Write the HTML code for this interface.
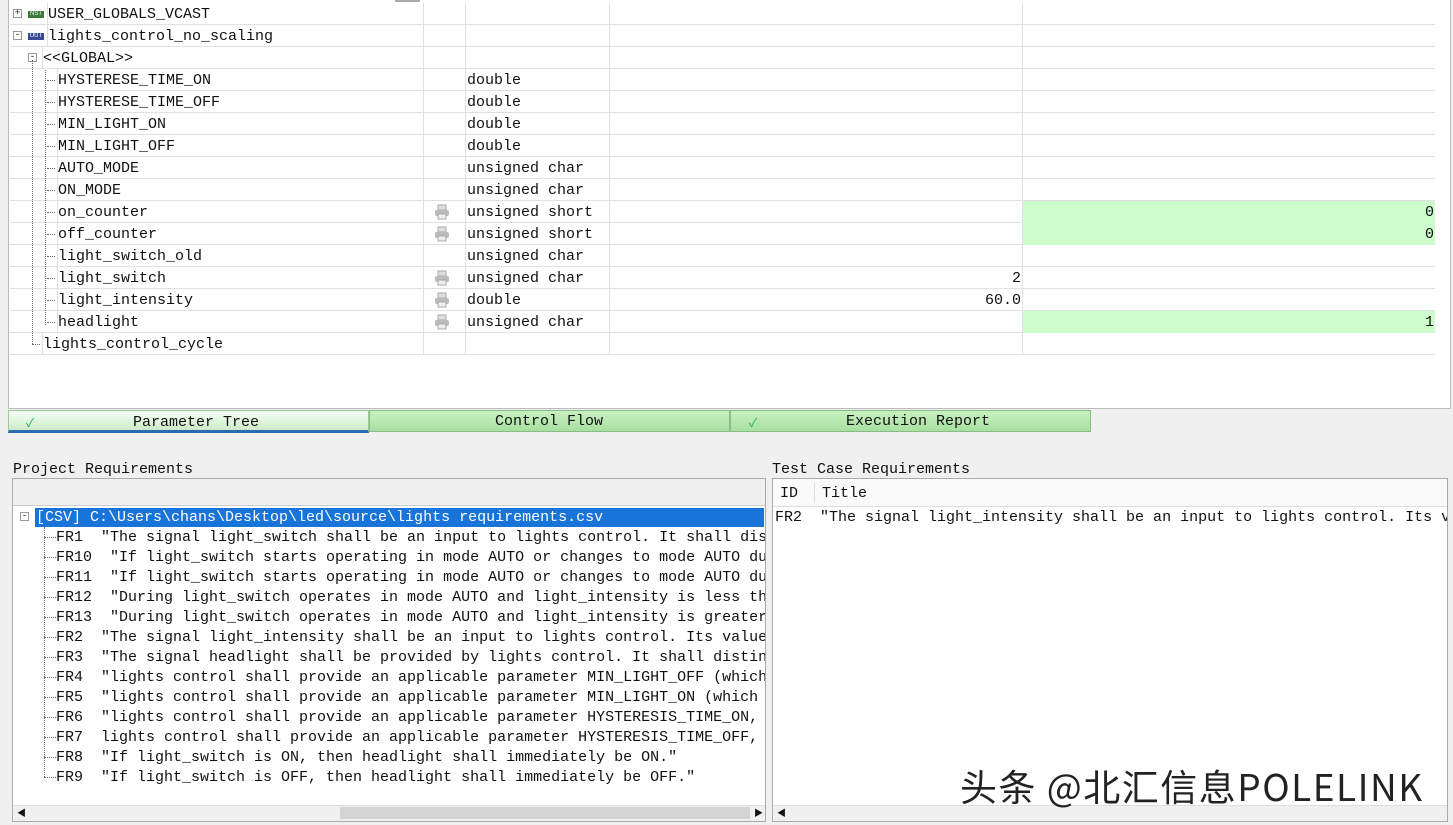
<!DOCTYPE html>
<html><head><meta charset="utf-8"><style>
*{margin:0;padding:0;box-sizing:border-box}
body{width:1453px;height:825px;background:#f0f0f0;position:relative;overflow:hidden;font-family:"Liberation Mono","Noto Sans CJK SC",monospace;font-size:15px;color:#111}
.a{position:absolute;white-space:nowrap}
.top{position:absolute;left:8px;top:0;width:1443px;height:409px;background:#fff;border:1px solid #bbb;border-top:none}
.row{position:absolute;left:10px;width:1425px;height:22px;border-bottom:1px solid #e0e0e0}
.c{position:absolute;top:0;height:22px;border-left:1px solid #e0e0e0;line-height:24px}
.g{background:#cdfccd}
.pr{position:absolute;left:433px;top:3px;width:18px;height:16px}
.req{position:absolute;line-height:20px;white-space:pre}
</style></head><body>
<div class="top"></div>
<div class="a" style="left:395px;top:0;width:25px;height:2px;background:#aaa"></div>
<div id="rows"></div>
<script>
var R=[
["USER_GLOBALS_VCAST",47,"","","",0,"nst"],
["lights_control_no_scaling",47,"","","",0,"uut"],
["<<GLOBAL>>",42,"","","",0,"g"],
["HYSTERESE_TIME_ON",57,"double","","",0],
["HYSTERESE_TIME_OFF",57,"double","","",0],
["MIN_LIGHT_ON",57,"double","","",0],
["MIN_LIGHT_OFF",57,"double","","",0],
["AUTO_MODE",57,"unsigned char","","",0],
["ON_MODE",57,"unsigned char","","",0],
["on_counter",57,"unsigned short","","0",1],
["off_counter",57,"unsigned short","","0",1],
["light_switch_old",57,"unsigned char","","",0],
["light_switch",57,"unsigned char","2","",1],
["light_intensity",57,"double","60.0","",1],
["headlight",57,"unsigned char","","1",1],
["lights_control_cycle",42,"","","",0]];
var h="";
R.forEach(function(r,i){
var y=3+i*22;
h+='<div class="row" style="top:'+y+'px">';
h+='<div class="c" style="left:'+(r[1]-10)+'px;">'+r[0].replace(/</g,'&lt;').replace(/>/g,'&gt;')+'</div>';
h+='<div class="c" style="left:413px;width:42px"></div>';
h+='<div class="c" style="left:455px;width:144px;padding-left:1px">'+r[2]+'</div>';
h+='<div class="c" style="left:599px;width:413px;text-align:right;padding-right:1px">'+r[3]+'</div>';
var g=(r[4]!=="")?' g':'';
h+='<div class="c'+g+'" style="left:1012px;width:413px;text-align:right;padding-right:1px">'+r[4]+'</div>';
if(r[5])h+='<svg class="pr" style="left:423px" viewBox="0 0 18 16"><rect x="5" y="1" width="8" height="5" fill="#ddd" stroke="#aaa"/><rect x="2" y="6" width="14" height="6" rx="2" fill="#bbb"/><rect x="5" y="10" width="8" height="5" fill="#eee" stroke="#aaa"/></svg>';
h+='</div>';
if(r[6]=="nst"||r[6]=="uut"){
h+='<div class="a" style="left:13px;top:'+(y+6)+'px;width:9px;height:9px;border:1px solid #999;background:#fff;font-size:9px;line-height:7px;text-align:center">'+(i==0?'+':'-')+'</div>';
h+='<div class="a" style="left:28px;top:'+(y+8)+'px;width:16px;height:7px;background:'+(r[6]=="nst"?'#3a7a3a':'#3a4a9a')+';color:#fff;font-size:6px;line-height:7px;text-align:center;font-family:Liberation Sans">'+(r[6]=="nst"?'NST':'UUT')+'</div>';
}
if(r[6]=="g")h+='<div class="a" style="left:28px;top:'+(y+6)+'px;width:9px;height:9px;border:1px solid #999;background:#fff;font-size:9px;line-height:7px;text-align:center">-</div>';
if(i>=3&&i<=14)h+='<div class="a" style="left:47px;top:'+(y+11)+'px;width:8px;border-top:1px dotted #666"></div>';
});
h+='<div class="a" style="left:32px;top:60px;height:284px;border-left:1px dotted #666"></div>';
h+='<div class="a" style="left:45px;top:70px;height:255px;border-left:1px dotted #666"></div>';
h+='<div class="a" style="left:32px;top:344px;width:8px;border-top:1px dotted #666"></div>';
document.getElementById('rows').innerHTML=h;
</script>
<div class="a" style="left:8px;top:410px;width:361px;height:23px;background:linear-gradient(#f4fff4,#cdebc8);border:1px solid #9c9;border-bottom:3px solid #2a6cb0"></div>
<div class="a" style="left:26px;top:414px;color:#2a6;font-size:12px">✓</div>
<div class="a" style="left:133px;top:413px;line-height:20px">Parameter Tree</div>
<div class="a" style="left:369px;top:410px;width:361px;height:22px;background:linear-gradient(#c8f0c0,#a8e0a0);border:1px solid #8b8"></div>
<div class="a" style="left:495px;top:412px;line-height:20px">Control Flow</div>
<div class="a" style="left:730px;top:410px;width:361px;height:22px;background:linear-gradient(#c8f0c0,#a8e0a0);border:1px solid #8b8"></div>
<div class="a" style="left:749px;top:414px;color:#2a6;font-size:12px">✓</div>
<div class="a" style="left:846px;top:412px;line-height:20px">Execution Report</div>
<div class="a" style="left:13px;top:460px;line-height:20px">Project Requirements</div>
<div class="a" style="left:12px;top:478px;width:754px;height:344px;background:#fff;border:1px solid #aaa"></div>
<div class="a" style="left:13px;top:479px;width:752px;height:27px;background:#f0f0f0;border-bottom:1px solid #ccc"></div>
<div class="a" style="left:20px;top:512px;width:9px;height:9px;border:1px solid #999;background:#fff;font-size:9px;line-height:7px;text-align:center">-</div>
<div class="a" style="left:35px;top:508px;width:729px;height:19px;background:#1874d8;color:#fff;line-height:20px;padding-left:1px">[CSV] C:\Users\chans\Desktop\led\source\lights requirements.csv</div>
<div class="a" style="left:44px;top:527px;height:250px;border-left:1px dotted #666"></div>
<div class="a" style="left:44px;top:528px;width:721px;height:262px;overflow:hidden">
<div id="reqs"></div></div>
<script>
var Q=[["FR1",'"The signal light_switch shall be an input to lights control. It shall distinguish'],
["FR10",'"If light_switch starts operating in mode AUTO or changes to mode AUTO during'],
["FR11",'"If light_switch starts operating in mode AUTO or changes to mode AUTO during'],
["FR12",'"During light_switch operates in mode AUTO and light_intensity is less than'],
["FR13",'"During light_switch operates in mode AUTO and light_intensity is greater'],
["FR2",'"The signal light_intensity shall be an input to lights control. Its value'],
["FR3",'"The signal headlight shall be provided by lights control. It shall distinguish'],
["FR4",'"lights control shall provide an applicable parameter MIN_LIGHT_OFF (which'],
["FR5",'"lights control shall provide an applicable parameter MIN_LIGHT_ON (which is'],
["FR6",'"lights control shall provide an applicable parameter HYSTERESIS_TIME_ON, which'],
["FR7",'lights control shall provide an applicable parameter HYSTERESIS_TIME_OFF, which'],
["FR8",'"If light_switch is ON, then headlight shall immediately be ON."'],
["FR9",'"If light_switch is OFF, then headlight shall immediately be OFF."']];
var s="";Q.forEach(function(q,i){s+='<div class="req a" style="left:0;top:'+(i*20)+'px"><span style="display:inline-block;width:12px;border-top:1px dotted #666;vertical-align:middle"></span>'+q[0]+'  '+q[1].replace(/"/g,'″')+'</div>';});
document.getElementById('reqs').innerHTML=s;
</script>
<div class="a" style="left:13px;top:805px;width:752px;height:16px;background:#f0f0f0;border-top:1px solid #ddd"></div>
<div class="a" style="left:340px;top:807px;width:410px;height:12px;background:#d4d4d4"></div>
<div class="a" style="left:17px;top:806px;font-size:9px">◀</div>
<div class="a" style="left:754px;top:806px;font-size:9px">▶</div>
<div class="a" style="left:772px;top:460px;line-height:20px">Test Case Requirements</div>
<div class="a" style="left:772px;top:478px;width:676px;height:344px;background:#fff;border:1px solid #aaa"></div>
<div class="a" style="left:773px;top:479px;width:674px;height:28px;background:#fafafa;border-bottom:1px solid #ddd"></div>
<div class="a" style="left:780px;top:484px;line-height:20px">ID</div>
<div class="a" style="left:814px;top:483px;height:20px;border-left:1px solid #ddd"></div>
<div class="a" style="left:822px;top:484px;line-height:20px">Title</div>
<div class="a" style="left:775px;top:508px;width:672px;overflow:hidden;line-height:20px;white-space:pre">FR2  ″The signal light_intensity shall be an input to lights control. Its value</div>
<div class="a" style="left:773px;top:805px;width:674px;height:16px;background:#f0f0f0;border-top:1px solid #ddd"></div>
<div class="a" style="left:777px;top:806px;font-size:9px">◀</div>
<div class="a" style="left:960px;top:758px;font-family:'Noto Sans CJK SC',sans-serif;font-size:37px;letter-spacing:1.5px;color:#222;text-shadow:0 0 2px #fff">头条 @北汇信息POLELINK</div>
</body></html>
